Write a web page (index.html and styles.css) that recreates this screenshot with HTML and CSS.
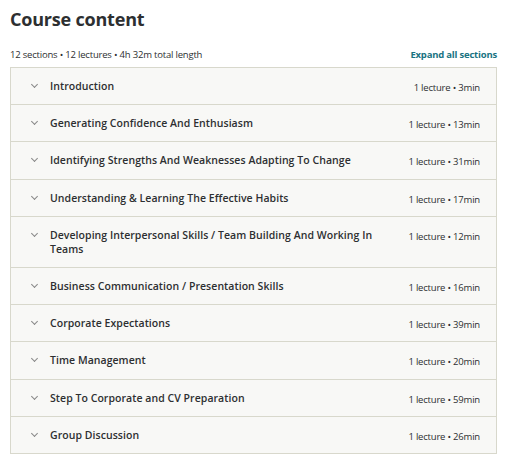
FILE: index.html
```html
<!DOCTYPE html>
<html lang="en">
<head>
  <meta charset="UTF-8" />
  <title>Course content</title>
  <link rel="stylesheet" href="styles.css">
</head>
<body>

<div class="course-content">
  <h2 class="cc-title">Course content</h2>

  <div class="cc-summary">
    <span>12 sections • 12 lectures • 4h 32m total length</span>
    <a class="expand-link" href="#">Expand all sections</a>
  </div>

  <div class="section-list">
    <div class="section-row">
      <span class="chev"></span>
      <span class="section-name">Introduction</span>
      <span class="section-meta">1 lecture • 3min</span>
    </div>
    <div class="section-row">
      <span class="chev"></span>
      <span class="section-name">Generating Confidence And Enthusiasm</span>
      <span class="section-meta">1 lecture • 13min</span>
    </div>
    <div class="section-row">
      <span class="chev"></span>
      <span class="section-name">Identifying Strengths And Weaknesses Adapting To Change</span>
      <span class="section-meta">1 lecture • 31min</span>
    </div>
    <div class="section-row">
      <span class="chev"></span>
      <span class="section-name">Understanding &amp; Learning The Effective Habits</span>
      <span class="section-meta">1 lecture • 17min</span>
    </div>
    <div class="section-row">
      <span class="chev"></span>
      <span class="section-name">Developing Interpersonal Skills / Team Building And Working In Teams</span>
      <span class="section-meta">1 lecture • 12min</span>
    </div>
    <div class="section-row">
      <span class="chev"></span>
      <span class="section-name">Business Communication / Presentation Skills</span>
      <span class="section-meta">1 lecture • 16min</span>
    </div>
    <div class="section-row">
      <span class="chev"></span>
      <span class="section-name">Corporate Expectations</span>
      <span class="section-meta">1 lecture • 39min</span>
    </div>
    <div class="section-row">
      <span class="chev"></span>
      <span class="section-name">Time Management</span>
      <span class="section-meta">1 lecture • 20min</span>
    </div>
    <div class="section-row">
      <span class="chev"></span>
      <span class="section-name">Step To Corporate and CV Preparation</span>
      <span class="section-meta">1 lecture • 59min</span>
    </div>
    <div class="section-row">
      <span class="chev"></span>
      <span class="section-name">Group Discussion</span>
      <span class="section-meta">1 lecture • 26min</span>
    </div>
  </div>
</div>

</body>
</html>
```

FILE: styles.css
```css
body {
  font-family: 'Open Sans', sans-serif;
  background: #fff;
  color: #2d2f31;
  margin: 0;
  padding: 0;
}
.course-content {
  width: 487px;
  padding: 8px 0 0 10px;
}
.cc-title {
  margin: 0;
  font-size: 18px;
  font-weight: 700;
  line-height: 22px;
  letter-spacing: -0.2px;
}
.cc-summary {
  display: flex;
  justify-content: space-between;
  align-items: center;
  margin-top: 18px;
  font-size: 9.5px;
  line-height: 14px;
  letter-spacing: -0.2px;
}
.expand-link {
  color: #1a7382;
  font-weight: 700;
  text-decoration: none;
}
.section-list {
  margin-top: 5px;
  border: 1px solid #d8d8cc;
  border-bottom: none;
}
.section-row {
  display: flex;
  align-items: flex-start;
  background: #f8f8f6;
  border-bottom: 1px solid #d8d8cc;
  padding: 11.1px 16px 11.1px 21px;
}
.chev {
  width: 4px;
  height: 4px;
  border-right: 1px solid #888;
  border-bottom: 1px solid #888;
  transform: rotate(45deg);
  margin: 3px 13px 0 0;
  flex: none;
}
.section-name {
  flex: 1;
  font-size: 10.5px;
  font-weight: 600;
  line-height: 14px;
  letter-spacing: 0.05px;
  padding-right: 24px;
}
.section-meta {
  font-size: 9.5px;
  line-height: 17px;
  height: 14px;
  letter-spacing: -0.2px;
  white-space: nowrap;
}
```
